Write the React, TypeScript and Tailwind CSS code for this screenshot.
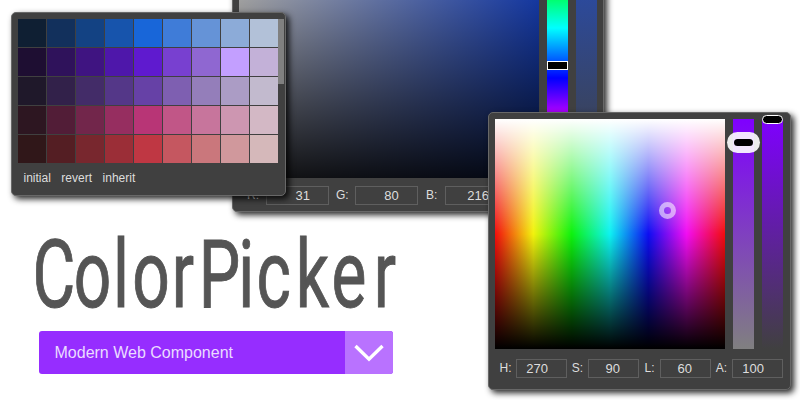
const swatchRows: string[][] = [
  ['#0f1f33', '#12305c', '#134283', '#1754ac', '#1866d9', '#3f7cd8', '#6593d7', '#8cabd8', '#b2c1d8'],
  ['#1e0e32', '#2f125b', '#3f1481', '#4e17aa', '#5f1acf', '#7840d0', '#8f67d1', '#c39fff', '#c3b1d8'],
  ['#1f182a', '#32214a', '#432c68', '#543788', '#6641a6', '#7e5fb1', '#947eba', '#ab9cc5', '#c2bace'],
  ['#2d1621', '#521d37', '#72264b', '#962e60', '#b83576', '#c15687', '#c7759c', '#cd96b1', '#d3b8c5'],
  ['#301719', '#541e23', '#78272e', '#9b2e37', '#bf3743', '#c55760', '#ca777c', '#d0989c', '#d5b8ba'],
]

const panel =
  'absolute rounded-[5px] border border-[#686868] bg-[#404040] shadow-[3px_3px_6px_rgba(0,0,0,0.85)]'

function Field({ label, value, box, gap }: { label: string; value: number; box: string; gap: string }) {
  return (
    <label className={`flex h-[19px] items-center text-[12px] text-[#dddddd] ${gap}`}>
      <span className="leading-[19px]">{label}:</span>
      <span className={`flex h-[19px] items-center justify-end border border-[#5f5f5f] pr-[18px] text-[13px] ${box}`}>
        {value}
      </span>
    </label>
  )
}

function Swatches() {
  return (
    <section className={`${panel} left-[11px] top-[12px] h-[184px] w-[275px] pl-[6px] pt-[6px]`}>
      <div className="flex">
        <div className="grid grid-cols-[repeat(9,28px)] gap-px">
          {swatchRows.flat().map((color) => (
            <div key={color} className="h-[28px]" style={{ backgroundColor: color }} />
          ))}
        </div>
        <div className="h-[65px] w-[6px] bg-[#808080]" />
      </div>
      <div className="flex gap-[10.5px] pl-[5.5px] pt-[7px] text-[12px] leading-[16px] text-[#dddddd]">
        <span>initial</span>
        <span>revert</span>
        <span>inherit</span>
      </div>
    </section>
  )
}

function RgbPicker() {
  return (
    <section className={`${panel} left-[232px] top-[-129px] h-[341px] w-[372px] px-[6px] pt-[6px]`}>
      <div className="flex gap-[8px]">
        <div className="h-[300px] w-[300px] bg-[linear-gradient(to_bottom,transparent,rgba(0,0,0,0.92)),linear-gradient(to_right,#ffffff,#2058ff)]" />
        <div className="relative h-[300px] w-[21px] bg-[linear-gradient(to_bottom,#ff0000,#ffff00,#00ff00,#00ffff,#0000ff,#ff00ff,#ff0000)]">
          <div className="absolute left-0 top-[183px] h-[9px] w-[21px] border border-white bg-black" />
        </div>
        <div className="h-[300px] w-[21px] bg-[linear-gradient(to_bottom,#1f50d8,#404040)]" />
      </div>
      <div className="flex pl-[8px] pt-[8px]">
        <Field label="R" value={31} box="w-[63px]" gap="w-[89px] gap-[7px]" />
        <Field label="G" value={80} box="w-[63px]" gap="w-[90px] gap-[6px]" />
        <Field label="B" value={216} box="w-[63px]" gap="gap-[7.7px]" />
      </div>
    </section>
  )
}

function HslPicker() {
  return (
    <section className={`${panel} left-[488px] top-[112px] h-[278px] w-[303px] pl-[6px] pt-[6px]`}>
      <div className="flex gap-[8px]">
        <div className="relative h-[230px] w-[230px] bg-[linear-gradient(to_bottom,#ffffff,rgba(255,255,255,0)_50%,rgba(0,0,0,0)_50%,#000000),linear-gradient(to_right,#f20d0d,#f2f20d,#0df20d,#0df2f2,#0d0df2,#f20df2,#f20d0d)]">
          <div className="absolute left-[164px] top-[83px] size-[17px] rounded-full border-[5px] border-white/55" />
        </div>
        <div className="relative h-[230px] w-[21px] bg-[linear-gradient(to_bottom,#7f00ff,#808080)]">
          <div className="absolute left-[-6px] top-[13px] flex h-[21px] w-[33px] items-center justify-center rounded-full bg-white/90">
            <div className="h-[7px] w-[19px] rounded-full bg-black" />
          </div>
        </div>
        <div className="relative h-[230px] w-[21px] bg-[linear-gradient(to_bottom,#7f00ff,#404040)]">
          <div className="absolute left-0 top-[-4px] h-[9px] w-[21px] rounded-full border border-white bg-black" />
        </div>
      </div>
      <div className="flex pt-[10px]">
        <Field label="H" value={270} box="w-[51px]" gap="w-[72px] justify-end gap-[4.5px]" />
        <Field label="S" value={90} box="w-[51px]" gap="w-[72px] justify-end gap-[5px]" />
        <Field label="L" value={60} box="w-[51px]" gap="w-[72px] justify-end gap-[5.5px]" />
        <Field label="A" value={100} box="w-[51px]" gap="w-[72px] justify-end gap-[5px]" />
      </div>
    </section>
  )
}

export default function App() {
  return (
    <main className="relative h-[400px] w-[800px] overflow-hidden bg-white font-['Liberation_Sans',Arial,sans-serif]">
      <div className="flex flex-col pl-[20px] pt-[210px]">
        <svg className="block h-[121px] w-[400px] overflow-visible" viewBox="20 210 400 121" role="img" aria-label="ColorPicker">
          <text
            transform="scale(0.7 1)"
            y="307.5"
            x="46.5 105.5 161.5 189 245.5 284 340.5 366.5 422.5 473.5 534"
            fontFamily="Roboto, sans-serif"
            fontSize="94"
            fontWeight="400"
            fill="#555555"
            stroke="#555555"
            strokeWidth="1"
          >
            ColorPicker
          </text>
        </svg>
        <button className="ml-[19px] flex h-[43px] w-[354px] overflow-hidden rounded-[3px] bg-[#962dff] text-left">
          <span className="flex-1 pl-[15.5px] text-[16px] leading-[43px] text-[#eadbff]">Modern Web Component</span>
          <span className="flex h-full w-[48px] items-center justify-center bg-[#b972ff]">
            <svg width="30" height="18" viewBox="0 0 30 18" fill="none" stroke="white" strokeWidth="3.4">
              <path d="M1.5 2 L15 15.2 L28.5 2" />
            </svg>
          </span>
        </button>
      </div>
      <RgbPicker />
      <Swatches />
      <HslPicker />
    </main>
  )
}
